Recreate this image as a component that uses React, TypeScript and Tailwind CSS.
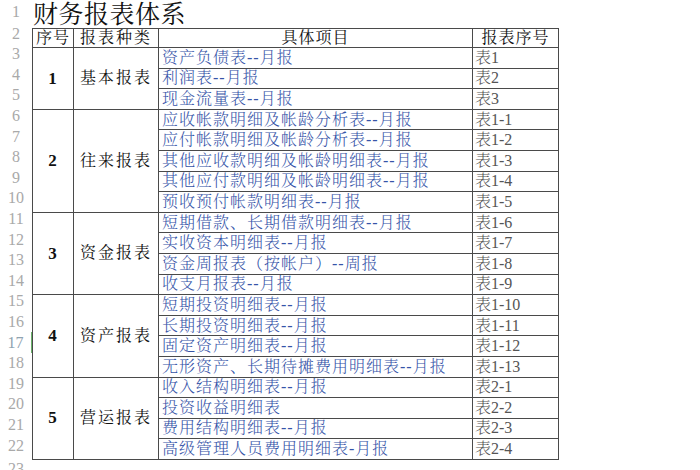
const groups = [
  {
    no: "1",
    name: "基本报表",
    span: "row-span-3",
    items: [
      ["资产负债表--月报", "表1"],
      ["利润表--月报", "表2"],
      ["现金流量表--月报", "表3"],
    ],
  },
  {
    no: "2",
    name: "往来报表",
    span: "row-span-5",
    items: [
      ["应收帐款明细及帐龄分析表--月报", "表1-1"],
      ["应付帐款明细及帐龄分析表--月报", "表1-2"],
      ["其他应收款明细及帐龄明细表--月报", "表1-3"],
      ["其他应付款明细及帐龄明细表--月报", "表1-4"],
      ["预收预付帐款明细表--月报", "表1-5"],
    ],
  },
  {
    no: "3",
    name: "资金报表",
    span: "row-span-4",
    items: [
      ["短期借款、长期借款明细表--月报", "表1-6"],
      ["实收资本明细表--月报", "表1-7"],
      ["资金周报表（按帐户）--周报", "表1-8"],
      ["收支月报表--月报", "表1-9"],
    ],
  },
  {
    no: "4",
    name: "资产报表",
    span: "row-span-4",
    items: [
      ["短期投资明细表--月报", "表1-10"],
      ["长期投资明细表--月报", "表1-11"],
      ["固定资产明细表--月报", "表1-12"],
      ["无形资产、长期待摊费用明细表--月报", "表1-13"],
    ],
  },
  {
    no: "5",
    name: "营运报表",
    span: "row-span-4",
    items: [
      ["收入结构明细表--月报", "表2-1"],
      ["投资收益明细表", "表2-2"],
      ["费用结构明细表--月报", "表2-3"],
      ["高级管理人员费用明细表-月报", "表2-4"],
    ],
  },
];

const font = {
  fontFamily:
    '"Liberation Serif", "Noto Serif CJK SC", "Noto Sans CJK SC", serif',
};

const cell = "border-r border-b border-[#4a4a4a] flex items-center overflow-hidden whitespace-nowrap";

export default function App() {
  const rowNums = Array.from({ length: 20 }, (_, i) => i + 3);

  return (
    <div className="w-[700px] h-[470px] bg-white overflow-hidden flex" style={font}>
      {/* row numbers */}
      <div className="w-[32px] flex flex-col text-[16px] text-[#a9a9a9]">
        <div className="h-[28px] flex items-center justify-center">1</div>
        <div className="h-[20px] flex items-center justify-center">2</div>
        {rowNums.map((n) => (
          <div
            key={n}
            className={
              n === 17
                ? "h-[20.6px] flex items-center justify-center text-[#8fa3b0] border-r border-[#6cb36c]"
                : "h-[20.6px] flex items-center justify-center"
            }
          >
            {n}
          </div>
        ))}
        <div className="h-[20.6px] flex items-center justify-center pt-[6px]">23</div>
      </div>

      <div className="flex flex-col">
        <div className="h-[28px] flex items-center pl-[1px] text-[25px] tracking-[0.5px] text-[#111] leading-none pt-[1px]">
          财务报表体系
        </div>
        <div className="grid grid-cols-[41px_85px_314px_86px] grid-rows-[19px_repeat(20,20.6px)] border-l border-t border-[#4a4a4a] w-[527px] text-[16px] tracking-[1px]">
          <div className={cell + " justify-center text-[#111]"}>序号</div>
          <div className={cell + " justify-center text-[#111] tracking-[2px]"}>报表种类</div>
          <div className={cell + " justify-center text-[#111]"}>具体项目</div>
          <div className={cell + " justify-center text-[#111]"}>报表序号</div>
          {groups.map((g) => [
            <div key={g.no + "n"} className={cell + " " + g.span + " justify-center text-[17px] text-[#111] font-semibold"}>
              {g.no}
            </div>,
            <div key={g.no + "t"} className={cell + " " + g.span + " justify-center text-[#111] tracking-[2px]"}>
              {g.name}
            </div>,
            ...g.items.map(([item, code]) => [
              <div key={code + "i"} className={cell + " pl-[3px] text-[#3654a8] font-light"}>
                {item}
              </div>,
              <div key={code + "c"} className={cell + " pl-[2px] text-[#555] tracking-[0px] font-light"}>
                {code}
              </div>,
            ]),
          ])}
        </div>
      </div>
    </div>
  );
}
